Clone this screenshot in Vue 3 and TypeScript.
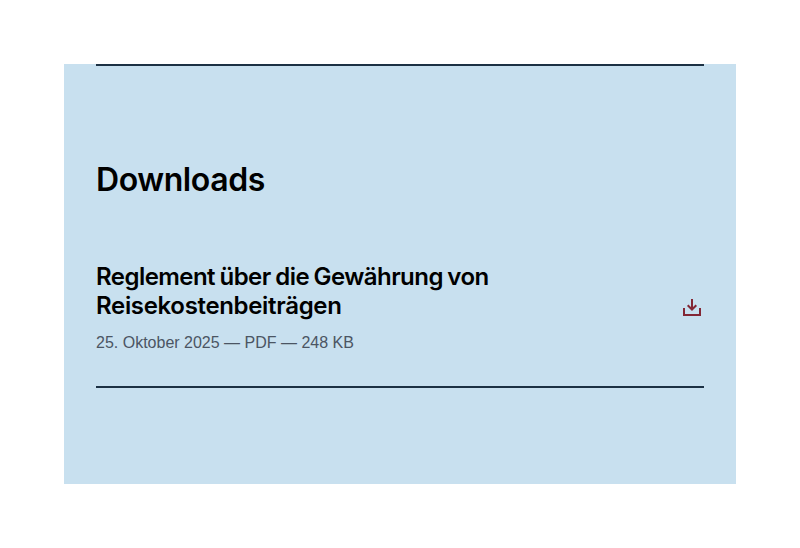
<script setup lang="ts">
interface DownloadItem {
  title: string
  meta: string
}

const items: DownloadItem[] = [
  {
    title: 'Reglement über die Gewährung von Reisekostenbeiträgen',
    meta: '25. Oktober 2025 — PDF — 248 KB',
  },
]
</script>

<template>
  <section class="downloads">
    <div class="inner">
      <h2 class="heading">Downloads</h2>
      <ul class="list">
        <li v-for="item in items" :key="item.title" class="item">
          <div class="text">
            <h3 class="title">{{ item.title }}</h3>
            <p class="meta">{{ item.meta }}</p>
          </div>
          <svg class="icon" viewBox="0 0 24 24" fill="none" stroke="currentColor" stroke-width="2">
            <path d="M4 12v7h16v-7M12 3v10.5M7.7 9.2L12 13.5l4.3-4.3" />
          </svg>
        </li>
      </ul>
    </div>
  </section>
</template>

<style>
body {
  background: #fff;
}
</style>

<style scoped>
.downloads {
  box-sizing: border-box;
  height: 420px;
  margin: 64px;
  padding: 0 32px;
  background: #c8e0ef;
  font-family: "Liberation Sans", Arial, sans-serif;
}
.inner {
  border-top: 2px solid #1c3144;
  padding-top: 94px;
}
.heading {
  margin: 0;
  font-family: Inter, "Liberation Sans", sans-serif;
  font-size: 32px;
  line-height: 40px;
  font-weight: 600;
  letter-spacing: -0.42px;
  color: #000;
}
.list {
  list-style: none;
  margin: 0;
  padding: 62px 0 0;
}
.item {
  display: flex;
  justify-content: space-between;
  align-items: center;
  padding-bottom: 31px;
  border-bottom: 2px solid #1c3144;
}
.text {
  width: 440px;
}
.title {
  margin: 0;
  font-family: Inter, "Liberation Sans", sans-serif;
  font-size: 24px;
  line-height: 29px;
  font-weight: 600;
  letter-spacing: -0.33px;
  color: #000;
}
.title::first-line {
  letter-spacing: -0.55px;
  word-spacing: -1px;
}
.meta {
  margin: 11px 0 0;
  font-size: 16px;
  line-height: 24px;
  color: #4b5563;
}
.icon {
  width: 24px;
  height: 24px;
  margin-bottom: 1px;
  color: #832735;
}
</style>
